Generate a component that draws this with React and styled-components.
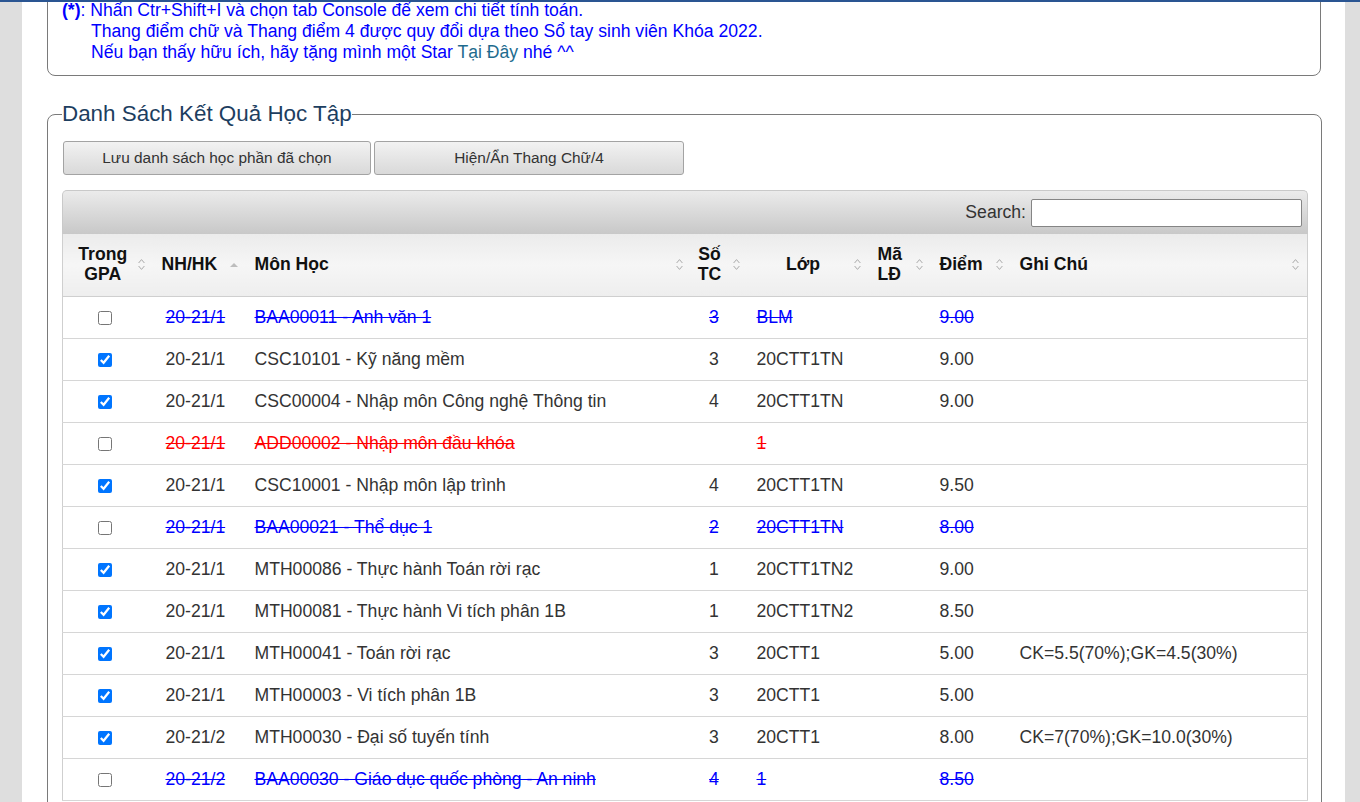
import React from 'react'
import styled, { createGlobalStyle } from 'styled-components'

const GlobalStyle = createGlobalStyle`
  html, body {
    margin: 0;
    padding: 0;
  }
  body {
    background: #dedede;
    font-family: "Liberation Sans", Arial, sans-serif;
    overflow: hidden;
  }
`

const TopEdge = styled.div`
  position: fixed;
  top: 0;
  left: 0;
  right: 0;
  height: 2px;
  background: #2a5592;
  z-index: 2;
`

const Page = styled.main`
  margin: 0 15px 0 22px;
  min-height: 802px;
  padding: 0 24px 20px 25px;
  background: #fff;
  overflow: hidden;
`

const Box = styled.fieldset`
  margin: 0;
  padding: 10px 13px 12px 14px;
  border: 1px solid #7a7a7a;
  border-radius: 8px;
`

const NoteBox = styled(Box)`
  margin-top: -11px;
`

const ResultBox = styled(Box)`
  margin-top: 25px;
  padding-top: 14px;
`

const Legend = styled.legend`
  padding: 0;
  font-size: 22.4px;
  color: #1d3e5f;
`

const NoteLine = styled.div`
  font-size: 17.6px;
  color: #0000ff;
  padding-left: ${(p) => (p.$indent ? '29px' : '0')};
`

const Star = styled.b`
  font-weight: bold;
`

const NoteLink = styled.span`
  color: #1e6b8e;
`

const Actions = styled.div`
  display: flex;
  gap: 3px;
  margin-left: 1px;
`

const Button = styled.button`
  width: ${(p) => p.$w}px;
  height: 34px;
  border: 1px solid #a3a3a3;
  border-radius: 3px;
  background: linear-gradient(#f2f2f2, #d9d9d9);
  font-family: "Liberation Sans", Arial, sans-serif;
  font-size: 15.4px;
  color: #333;
`

const TableWrap = styled.div`
  margin-top: 15px;
`

const Toolbar = styled.div`
  display: flex;
  justify-content: flex-end;
  align-items: center;
  gap: 5px;
  box-sizing: border-box;
  height: 44px;
  padding: 0 5px;
  border: 1px solid #c9c9c9;
  border-bottom: none;
  border-radius: 5px 5px 0 0;
  background: linear-gradient(#ebebeb, #c8c8c8);
  font-size: 17.6px;
  color: #333;
`

const SearchInput = styled.input`
  box-sizing: border-box;
  width: 271px;
  height: 28px;
  margin: 0;
  border: 1px solid #858585;
  border-radius: 2px;
  background: #fff;
`

const Table = styled.table`
  width: 100%;
  table-layout: fixed;
  border-collapse: collapse;
  border-left: 1px solid #cfcfcf;
  border-right: 1px solid #cfcfcf;
  font-size: 17.6px;
`

const Th = styled.th`
  padding: 10px 8px 12px ${(p) => p.$pl}px;
  border-bottom: 1px solid #cfcfcf;
  background: linear-gradient(#ebebeb, #f6f6f6 50%, #eeeeee);
  font-weight: bold;
  line-height: 20px;
  color: #111;
`

const HeadInner = styled.div`
  display: flex;
  align-items: center;
  gap: 4px;
`

const HeadLabel = styled.span`
  flex: 1;
  text-align: ${(p) => p.$align};
`

const Td = styled.td`
  padding: 10px 10px 10px ${(p) => p.$pl}px;
  border-bottom: 1px solid #d6d6d6;
  line-height: 21px;
  text-align: ${(p) => p.$align};
  white-space: nowrap;
  color: ${(p) => (p.$tone === 'blue' ? '#0000ff' : p.$tone === 'red' ? '#ff0000' : '#333')};
  text-decoration: ${(p) => (p.$tone === 'ok' ? 'none' : 'line-through')};
`

const Check = styled.input`
  width: 14px;
  height: 14px;
  margin: 0 5px 0 0;
  vertical-align: -2px;
`

const SortBoth = () => (
  <svg width="7" height="13" viewBox="0 0 7 13" fill="none" stroke="#aaaaaa" strokeWidth="1">
    <path d="M0.6 5 L3.5 1.6 L6.4 5" />
    <path d="M0.6 8 L3.5 11.4 L6.4 8" />
  </svg>
)

const SortAsc = () => (
  <svg width="8" height="13" viewBox="0 0 8 13">
    <path d="M0 9 L4 5 L8 9 Z" fill="#bdbdbd" />
  </svg>
)

const columns = [
  { key: 'gpa', label: <>Trong<br />GPA</>, width: 90, head: 'center', body: 'center', pl: 9, sort: 'both' },
  { key: 'term', label: 'NH/HK', width: 93, head: 'left', body: 'left', pl: 9, bodyPl: 13, sort: 'asc' },
  { key: 'name', label: 'Môn Học', width: 445, head: 'left', body: 'left', pl: 9, sort: 'both' },
  { key: 'tc', label: <>Số<br />TC</>, width: 57, head: 'center', body: 'center', pl: 0, bodyPl: 0, sort: 'both' },
  { key: 'cls', label: 'Lớp', width: 121, head: 'center', body: 'left', pl: 9, sort: 'both' },
  { key: 'ld', label: <>Mã<br />LĐ</>, width: 62, head: 'left', body: 'left', pl: 9, sort: 'both' },
  { key: 'score', label: 'Điểm', width: 80, head: 'left', body: 'left', pl: 9, sort: 'both' },
  { key: 'note', label: 'Ghi Chú', width: 297, head: 'left', body: 'left', pl: 9, sort: 'both' },
]

const rows = [
  { tone: 'blue', on: false, term: '20-21/1', name: 'BAA00011 - Anh văn 1', tc: '3', cls: 'BLM', ld: '', score: '9.00', note: '' },
  { tone: 'ok', on: true, term: '20-21/1', name: 'CSC10101 - Kỹ năng mềm', tc: '3', cls: '20CTT1TN', ld: '', score: '9.00', note: '' },
  { tone: 'ok', on: true, term: '20-21/1', name: 'CSC00004 - Nhập môn Công nghệ Thông tin', tc: '4', cls: '20CTT1TN', ld: '', score: '9.00', note: '' },
  { tone: 'red', on: false, term: '20-21/1', name: 'ADD00002 - Nhập môn đầu khóa', tc: '', cls: '1', ld: '', score: '', note: '' },
  { tone: 'ok', on: true, term: '20-21/1', name: 'CSC10001 - Nhập môn lập trình', tc: '4', cls: '20CTT1TN', ld: '', score: '9.50', note: '' },
  { tone: 'blue', on: false, term: '20-21/1', name: 'BAA00021 - Thể dục 1', tc: '2', cls: '20CTT1TN', ld: '', score: '8.00', note: '' },
  { tone: 'ok', on: true, term: '20-21/1', name: 'MTH00086 - Thực hành Toán rời rạc', tc: '1', cls: '20CTT1TN2', ld: '', score: '9.00', note: '' },
  { tone: 'ok', on: true, term: '20-21/1', name: 'MTH00081 - Thực hành Vi tích phân 1B', tc: '1', cls: '20CTT1TN2', ld: '', score: '8.50', note: '' },
  { tone: 'ok', on: true, term: '20-21/1', name: 'MTH00041 - Toán rời rạc', tc: '3', cls: '20CTT1', ld: '', score: '5.00', note: 'CK=5.5(70%);GK=4.5(30%)' },
  { tone: 'ok', on: true, term: '20-21/1', name: 'MTH00003 - Vi tích phân 1B', tc: '3', cls: '20CTT1', ld: '', score: '5.00', note: '' },
  { tone: 'ok', on: true, term: '20-21/2', name: 'MTH00030 - Đại số tuyến tính', tc: '3', cls: '20CTT1', ld: '', score: '8.00', note: 'CK=7(70%);GK=10.0(30%)' },
  { tone: 'blue', on: false, term: '20-21/2', name: 'BAA00030 - Giáo dục quốc phòng - An ninh', tc: '4', cls: '1', ld: '', score: '8.50', note: '' },
]

const App = () => (
  <>
    <GlobalStyle />
    <TopEdge />
    <Page>
      <NoteBox>
        <NoteLine>
          <Star>(*)</Star>: Nhấn Ctr+Shift+I và chọn tab Console để xem chi tiết tính toán.
        </NoteLine>
        <NoteLine $indent>
          Thang điểm chữ và Thang điểm 4 được quy đổi dựa theo Sổ tay sinh viên Khóa 2022.
        </NoteLine>
        <NoteLine $indent>
          Nếu bạn thấy hữu ích, hãy tặng mình một Star <NoteLink>Tại Đây</NoteLink> nhé ^^
        </NoteLine>
      </NoteBox>

      <ResultBox>
        <Legend>Danh Sách Kết Quả Học Tập</Legend>
        <Actions>
          <Button type="button" $w={308}>Lưu danh sách học phần đã chọn</Button>
          <Button type="button" $w={310}>Hiện/Ẩn Thang Chữ/4</Button>
        </Actions>

        <TableWrap>
          <Toolbar>
            <label htmlFor="search">Search:</label>
            <SearchInput id="search" type="search" />
          </Toolbar>
          <Table>
            <colgroup>
              {columns.map((c) => (
                <col key={c.key} style={{ width: c.width }} />
              ))}
            </colgroup>
            <thead>
              <tr>
                {columns.map((c) => (
                  <Th key={c.key} $pl={c.pl}>
                    <HeadInner>
                      <HeadLabel $align={c.head}>{c.label}</HeadLabel>
                      {c.sort === 'asc' ? <SortAsc /> : <SortBoth />}
                    </HeadInner>
                  </Th>
                ))}
              </tr>
            </thead>
            <tbody>
              {rows.map((r, i) => (
                <tr key={i}>
                  <Td $align="center" $pl={9} $tone="ok">
                    <Check type="checkbox" defaultChecked={r.on} />
                  </Td>
                  {columns.slice(1).map((c) => (
                    <Td key={c.key} $align={c.body} $pl={c.bodyPl ?? 9} $tone={r.tone}>
                      {r[c.key]}
                    </Td>
                  ))}
                </tr>
              ))}
            </tbody>
          </Table>
        </TableWrap>
      </ResultBox>
    </Page>
  </>
)

export default App
